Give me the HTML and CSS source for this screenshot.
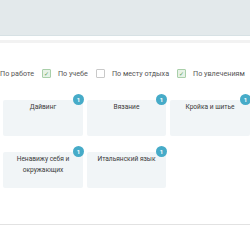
FILE: index.html
```html
<!DOCTYPE html>
<html lang="ru">
<head>
    <meta charset="UTF-8">
    <meta name="viewport" content="width=device-width, initial-scale=1.0">
    <title>Интересы</title>
    <link rel="stylesheet" href="styles.css">
</head>
<body>

    <div class="topbar"></div>
    <div class="divider"></div>

    <div class="panel">
        <div class="filters">
            <label class="filter"><span class="check"></span>По работе</label>
            <label class="filter"><span class="check checked">&#10003;</span>По учебе</label>
            <label class="filter"><span class="check"></span>По месту отдыха</label>
            <label class="filter"><span class="check checked">&#10003;</span>По увлечениям</label>
        </div>

        <div class="grid">
            <div class="card">Дайвинг<span class="badge">1</span></div>
            <div class="card">Вязание<span class="badge">1</span></div>
            <div class="card">Кройка и шитье<span class="badge">1</span></div>
            <div class="card">Ненавижу себя и окружающих<span class="badge">1</span></div>
            <div class="card">Итальянский язык<span class="badge">1</span></div>
        </div>
    </div>

    <div class="footer"></div>

</body>
</html>
```

FILE: styles.css
```css
body {
    margin: 0;
    width: 250px;
    height: 250px;
    overflow: hidden;
    background: #fff;
    font-family: Roboto, "Liberation Sans", sans-serif;
    color: #333;
}
.topbar {
    height: 35px;
    background: #e3e9eb;
    border-bottom: 1px solid #d7e1e4;
}
.divider {
    margin-top: 4px;
    height: 3px;
    background: #f2f2f2;
}
.panel {
    padding-top: 22px;
}
.filters {
    display: flex;
    align-items: center;
    gap: 8px;
    height: 16px;
    margin-left: -16px;
    font-size: 7.2px;
    color: #555;
    white-space: nowrap;
}
.filter {
    display: inline-flex;
    align-items: center;
    gap: 7px;
}
.check {
    width: 7px;
    height: 7px;
    border: 1px solid #c9c9c9;
    border-radius: 1px;
    background: #fff;
    font-size: 6px;
    line-height: 7px;
    text-align: center;
    color: #5a9a5a;
}
.check.checked {
    background: #e6f2e6;
    border-color: #a9cfa9;
}
.grid {
    display: grid;
    grid-template-columns: 80px 79px 80px;
    grid-auto-rows: 36px;
    column-gap: 4px;
    row-gap: 16px;
    margin-top: 19px;
    padding-left: 3px;
}
.card {
    position: relative;
    background: #f1f5f7;
    border-radius: 2px;
    padding: 2px 8px 0;
    font-size: 6.6px;
    line-height: 11px;
    text-align: center;
    color: #3a3a3a;
}
.badge {
    position: absolute;
    top: -6px;
    right: -1px;
    width: 11px;
    height: 11px;
    border-radius: 50%;
    background: #46abc8;
    color: #fff;
    font-size: 6px;
    line-height: 11px;
    text-align: center;
    font-weight: bold;
}
.footer {
    margin-top: 36px;
    border-top: 1px solid #e2e2e2;
}
```
